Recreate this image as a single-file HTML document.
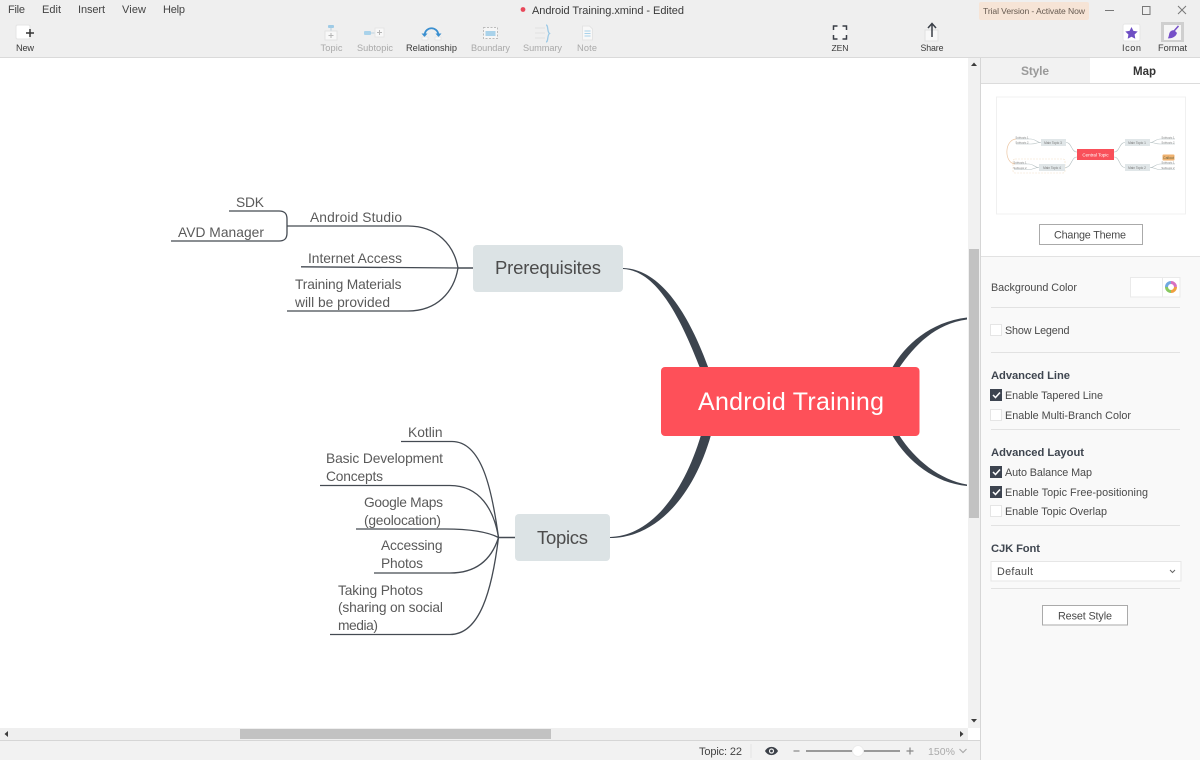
<!DOCTYPE html>
<html><head><meta charset="utf-8"><title>Android Training.xmind - Edited</title>
<style>
html,body{margin:0;padding:0;background:#fff;width:1200px;height:760px;overflow:hidden}
svg{display:block;position:absolute;left:0;top:0}
text{font-family:"Liberation Sans",sans-serif}
.ui{font-size:11px;fill:#444}
.tb{font-size:9.2px;fill:#3a3a3a;text-anchor:middle}
.dis{fill:#a9a9a9}
.m{font-size:13.8px;fill:#5a5a5a}
.p{font-size:10.8px;fill:#4a4a4a}
.h{font-size:11.2px;font-weight:bold;fill:#3f4650}
.ln{fill:none;stroke:#444a52;stroke-width:1.3}
.div{stroke:#e2e2e2;stroke-width:1}
.cb{fill:#fff;stroke:#e5e5e5}
.cbon{fill:#3d4450}
.ck{fill:none;stroke:#fff;stroke-width:1.5}
</style></head><body>
<svg width="1200" height="760" viewBox="0 0 1200 760" xmlns="http://www.w3.org/2000/svg">
<rect width="1200" height="760" fill="#efefef"/>
<rect x="0" y="58" width="968" height="670" fill="#fff"/>
<line x1="0" y1="57.5" x2="1200" y2="57.5" stroke="#dadada"/>

<!-- menu -->
<text x="8" y="13" class="ui" textLength="17">File</text>
<text x="42" y="13" class="ui" textLength="19">Edit</text>
<text x="78" y="13" class="ui" textLength="27">Insert</text>
<text x="122" y="13" class="ui" textLength="24">View</text>
<text x="163" y="13" class="ui" textLength="22">Help</text>
<circle cx="523" cy="9.5" r="2.4" fill="#e8485a"/>
<text x="532" y="14" style="font-size:11px;fill:#3a3a3a" textLength="152">Android Training.xmind - Edited</text>
<rect x="979" y="2" width="110" height="18" rx="2" fill="#f6e4d6"/>
<text x="983" y="14" style="font-size:8.6px;fill:#665a50" textLength="102">Trial Version - Activate Now</text>
<line x1="1105" y1="10.5" x2="1114" y2="10.5" stroke="#777"/>
<rect x="1142.5" y="6.5" width="7.5" height="8" fill="none" stroke="#777"/>
<path d="M1178 6l8 8M1186 6l-8 8" stroke="#777" fill="none"/>

<!-- toolbar -->
<rect x="16" y="25" width="14" height="14" rx="1.5" fill="#fff" stroke="#e4e4e4"/>
<path d="M30 29v8M26 33h8" stroke="#333" stroke-width="1.5"/>
<text x="25" y="51" class="tb" textLength="18">New</text>

<!-- Topic -->
<rect x="328" y="25" width="6" height="3" rx="1" fill="#9fcbe6"/>
<line x1="331" y1="28" x2="331" y2="31" stroke="#b7cfdd"/>
<rect x="325" y="31" width="12" height="9" fill="#f8f8f8" stroke="#e2e2e2"/>
<path d="M331 33v5M328.500 35.500h5" stroke="#b5b5b5"/>
<text x="331.500" y="51" class="tb dis" textLength="22">Topic</text>
<!-- Subtopic -->
<rect x="364" y="31" width="7" height="4" rx="1" fill="#a9d2ea"/>
<line x1="371" y1="33" x2="375" y2="33" stroke="#bcd3e0"/>
<rect x="375" y="28" width="9" height="9" fill="#f8f8f8" stroke="#e6e6e6"/>
<path d="M379.500 30v5M377 32.500h5" stroke="#b5b5b5"/>
<text x="375" y="51" class="tb dis" textLength="36">Subtopic</text>
<!-- Relationship -->
<path d="M424.500 35c1-9 13-9 14 0" fill="none" stroke="#3a8fd0" stroke-width="1.800"/>
<path d="M421.500 33.500h6l-3 3.500zM435.500 33.500h6l-3 3.500z" fill="#3a8fd0"/>
<rect x="422" y="37" width="6" height="3" fill="#fafafa" stroke="#ddd" stroke-width=".6"/>
<rect x="435" y="37" width="6" height="3" fill="#fafafa" stroke="#ddd" stroke-width=".6"/>
<text x="431.500" y="51" class="tb" textLength="51">Relationship</text>
<!-- Boundary -->
<rect x="483.500" y="27.500" width="14" height="11" fill="#f6f6f6" stroke="#bbb" stroke-dasharray="2 1.500"/>
<rect x="485.500" y="31" width="10" height="5" fill="#a9d2ea"/>
<text x="490.500" y="51" class="tb dis" textLength="39">Boundary</text>
<!-- Summary -->
<path d="M535 28h10M535 33h10M535 38h10" stroke="#e3e3e3" stroke-width="1.200"/>
<path d="M546 25c2.500 0 1 7 3.500 8.500c-2.500 1.500-1 8.500-3.500 8.500" fill="none" stroke="#9cc9e6" stroke-width="1.300"/>
<text x="542.500" y="51" class="tb dis" textLength="39">Summary</text>
<!-- Note -->
<path d="M582.500 26h7l3 3v11h-10z" fill="#f8f8f8" stroke="#e4e4e4"/>
<path d="M584.500 31h6M584.500 33.500h6M584.500 36h6" stroke="#a9d2ea"/>
<text x="587" y="51" class="tb dis" textLength="20">Note</text>
<!-- ZEN -->
<rect x="834" y="27" width="13" height="12" fill="#f6f6f6"/>
<path d="M833.500 30v-4h4M842.500 26h4v4M846.500 35v4h-4M837.500 39h-4v-4" fill="none" stroke="#3a3f47" stroke-width="1.500"/>
<text x="840" y="51" class="tb" textLength="17" style="font-size:8.6px">ZEN</text>
<!-- Share -->
<rect x="925" y="30" width="13" height="11" fill="#f8f8f8" stroke="#e0e0e0"/>
<path d="M932 37v-13M928 28l4-4.500 4 4.500" fill="none" stroke="#3a3f47" stroke-width="1.500"/>
<text x="932" y="51" class="tb" textLength="23" style="font-size:8.8px">Share</text>
<!-- Icon -->
<rect x="1123" y="24" width="17" height="17" rx="2" fill="#fff" stroke="#e6e6e6"/>
<path d="M1131.500 27l1.900 3.900 4.300.6-3.100 3 .7 4.300-3.800-2-3.800 2 .7-4.300-3.100-3 4.300-.6z" fill="#6e4fc4"/>
<text x="1131.500" y="51" class="tb" textLength="19">Icon</text>
<!-- Format -->
<rect x="1161" y="22" width="23" height="20" fill="#cfcfcf"/>
<rect x="1164" y="25" width="17" height="15" fill="#f6f6f6"/>
<path d="M1178.500 26.500l-4 4.500 2 2c-.5 2.500-3.500 5-8 5c.8-1.500 .8-3 1.200-4.500c.6-2 2.300-3 4.300-3l4-4.500z" fill="#7650c8" stroke="#7650c8" stroke-width=".8"/>
<text x="1172.500" y="51" class="tb" textLength="29">Format</text>

<!-- scrollbars -->
<rect x="968" y="58" width="12" height="670" fill="#f1f1f1"/>
<rect x="969" y="249" width="10" height="269" fill="#c2c2c2"/>
<path d="M971 66l3-3.500 3 3.500z M971 719l3 3.500 3-3.500z" fill="#3c3c3c"/>
<rect x="0" y="728" width="968" height="12" fill="#efefef"/>
<rect x="968" y="728" width="12" height="12" fill="#fff"/>
<rect x="240" y="729" width="311" height="10" fill="#c2c2c2"/>
<path d="M8 731l-3.500 3 3.500 3z M960 731l3.500 3-3.500 3z" fill="#3c3c3c"/>
<rect x="0" y="741" width="980" height="19" fill="#f2f2f2"/>
<line x1="0" y1="740.500" x2="980" y2="740.500" stroke="#d6d6d6"/>
<text x="699" y="755" style="font-size:11px;fill:#444" textLength="43">Topic: 22</text>
<line x1="751" y1="744" x2="751" y2="758" stroke="#e4e4e4"/>
<path d="M765 751c3-5.500 10-5.500 13 0c-3 5.500-10 5.500-13 0z" fill="#3c4149"/>
<circle cx="771.500" cy="751" r="2.600" fill="#f2f2f2"/><circle cx="771.500" cy="751" r="1.400" fill="#3c4149"/>
<line x1="793.500" y1="751" x2="799.500" y2="751" stroke="#888" stroke-width="1.200"/>
<line x1="806" y1="751" x2="900" y2="751" stroke="#9a9a9a" stroke-width="2"/>
<circle cx="858" cy="751" r="5.500" fill="#fff" stroke="#ececec"/>
<path d="M906.500 751h7M910 747.500v7" stroke="#888" stroke-width="1.200"/>
<text x="928" y="755" style="font-size:10.500px;fill:#aaa" textLength="27">150%</text>
<path d="M959.500 749l3.500 3.500 3.500-3.500" fill="none" stroke="#aaa" stroke-width="1.200"/>

<!-- right panel -->
<rect x="980" y="58" width="220" height="702" fill="#f9f9f9"/>
<line x1="980.500" y1="58" x2="980.500" y2="760" stroke="#d6d6d6"/>
<rect x="981" y="84" width="219" height="172" fill="#fff"/>
<rect x="981" y="58" width="109" height="25" fill="#f2f2f2"/>
<rect x="1090" y="58" width="110" height="25" fill="#fff"/>
<line x1="981" y1="83.500" x2="1200" y2="83.500" stroke="#dcdcdc"/>
<line x1="981" y1="256.500" x2="1200" y2="256.500" stroke="#e2e2e2"/>
<text x="1021" y="75" style="font-size:12px;font-weight:bold;fill:#9a9a9a" textLength="28">Style</text>
<text x="1133" y="75" style="font-size:11.500px;font-weight:bold;fill:#333" textLength="23">Map</text>

<!-- preview -->
<rect x="996.500" y="97" width="189" height="117" fill="#fff" stroke="#f0f0f0"/>
<g fill="none" stroke="#b4bfc1" stroke-width=".6">
<path d="M1077 152C1071 152 1072 142.500 1066 142.500M1077 157C1071 157 1072 167.500 1065 167.500M1114 152C1120 152 1119 142.500 1125 142.500M1114 157C1120 157 1119 167.500 1125 167.500"/>
<path d="M1041 142.500C1036 142.500 1036 139 1031 139H1016M1041 142.500C1036 142.500 1036 144 1031 144H1016M1150 142.500C1155 142.500 1155 139 1160 139H1175M1150 142.500C1155 142.500 1155 144 1160 144H1175M1039 167.500C1034 167.500 1034 164 1029 164H1014M1039 167.500C1034 167.500 1034 169.500 1029 169.500H1014M1150 167.500C1155 167.500 1155 164 1160 164H1175M1150 167.500C1155 167.500 1155 169.500 1160 169.500H1175"/>
</g>
<path d="M1016 139c-12 1-12 24 -1 25" fill="none" stroke="#ecc6a4" stroke-width=".7"/>
<rect x="1013" y="159" width="52" height="14" rx="2" fill="none" stroke="#f2dfc8" stroke-width=".6" stroke-dasharray="2 1"/>
<rect x="1077" y="149" width="37" height="11" fill="#f9505a"/>
<text x="1095.500" y="156.500" text-anchor="middle" style="font-size:4.500px;fill:#fff">Central Topic</text>
<g fill="#e0e6e8">
<rect x="1041" y="139" width="25" height="7"/><rect x="1039" y="164" width="26" height="7"/>
<rect x="1125" y="139" width="25" height="7"/><rect x="1125" y="164" width="25" height="7"/>
</g>
<g style="font-size:3.200px;fill:#777" text-anchor="middle">
<text x="1053" y="144">Main Topic 3</text><text x="1052" y="169">Main Topic 4</text>
<text x="1137" y="144">Main Topic 1</text><text x="1137" y="169">Main Topic 2</text>
</g>
<g style="font-size:2.800px;fill:#777" text-anchor="middle">
<text x="1022" y="138.500">Subtopic 1</text><text x="1022" y="143.500">Subtopic 2</text>
<text x="1020" y="163.500">Subtopic 1</text><text x="1020" y="169">Subtopic 2</text>
<text x="1168" y="138.500">Subtopic 1</text><text x="1168" y="143.500">Subtopic 2</text>
<text x="1168" y="163.500">Subtopic 1</text><text x="1168" y="169">Subtopic 2</text>
</g>
<rect x="1162.500" y="154.500" width="12" height="6" rx="1" fill="#f0b26f"/>
<text x="1168.500" y="159" text-anchor="middle" style="font-size:3.500px;fill:#664">Callout</text>

<rect x="1039.500" y="224.500" width="103" height="20" fill="#fff" stroke="#aaa"/>
<text x="1054" y="238.500" class="p" textLength="72">Change Theme</text>

<text x="991" y="291" class="p" textLength="86">Background Color</text>
<rect x="1130.500" y="277.500" width="49.500" height="19.500" fill="#fff" stroke="#eaeaea"/>
<line x1="1162.500" y1="278" x2="1162.500" y2="297" stroke="#eaeaea"/>
<circle cx="1171" cy="287" r="4.500" fill="none" stroke="#f0a040" stroke-width="3" stroke-dasharray="7 21.300"/>
<circle cx="1171" cy="287" r="4.500" fill="none" stroke="#88c860" stroke-width="3" stroke-dasharray="7 21.300" stroke-dashoffset="-7"/>
<circle cx="1171" cy="287" r="4.500" fill="none" stroke="#70a8e0" stroke-width="3" stroke-dasharray="7 21.300" stroke-dashoffset="-14"/>
<circle cx="1171" cy="287" r="4.500" fill="none" stroke="#d870c0" stroke-width="3" stroke-dasharray="7 21.300" stroke-dashoffset="-21"/>
<line x1="991" y1="307.500" x2="1180" y2="307.500" class="div"/>

<rect x="990.500" y="324.500" width="11" height="11" class="cb"/>
<text x="1005" y="334" class="p" textLength="64.500">Show Legend</text>
<line x1="991" y1="352.500" x2="1180" y2="352.500" class="div"/>

<text x="991" y="379" class="h" textLength="79">Advanced Line</text>
<rect x="990" y="389" width="12" height="12" class="cbon"/><path d="M993 395l2.500 2.500 4.500-5" class="ck"/>
<text x="1005" y="399" class="p" textLength="98">Enable Tapered Line</text>
<rect x="990.500" y="409.500" width="11" height="11" class="cb"/>
<text x="1005" y="419" class="p" textLength="126">Enable Multi-Branch Color</text>
<line x1="991" y1="429.500" x2="1180" y2="429.500" class="div"/>

<text x="991" y="456" class="h" textLength="93">Advanced Layout</text>
<rect x="990" y="466" width="12" height="12" class="cbon"/><path d="M993 472l2.500 2.500 4.500-5" class="ck"/>
<text x="1005" y="476" class="p" textLength="87">Auto Balance Map</text>
<rect x="990" y="486" width="12" height="12" class="cbon"/><path d="M993 492l2.500 2.500 4.500-5" class="ck"/>
<text x="1005" y="496" class="p" textLength="143">Enable Topic Free-positioning</text>
<rect x="990.500" y="505.500" width="11" height="11" class="cb"/>
<text x="1005" y="515" class="p" textLength="102">Enable Topic Overlap</text>
<line x1="991" y1="525.500" x2="1180" y2="525.500" class="div"/>

<text x="991" y="552" class="h" textLength="49">CJK Font</text>
<rect x="991" y="561.500" width="190" height="19.500" fill="#fff" stroke="#e6e6e6"/>
<text x="997" y="575" class="p" textLength="36">Default</text>
<path d="M1170 570l2.500 2.500 2.500-2.500" fill="none" stroke="#666"/>
<line x1="991" y1="588.500" x2="1180" y2="588.500" class="div"/>
<rect x="1042.500" y="605.500" width="85" height="19.500" fill="#fff" stroke="#aaa"/>
<text x="1058" y="619.500" class="p" textLength="54">Reset Style</text>

<!-- tapered main branches -->
<g fill="#3c444e">
<path d="M623 269C658 270.500 682 322 700 368L708.500 368C690 317 662 269 623 268Z"/>
<path d="M610 537C650 536 683 495 701 435L711 435C693 498 655 538 610 538Z"/>
<path d="M892 368C905 345 930 322 967 317.500L967 319.500C935 324 915 345 899 368Z"/>
<path d="M892 435C908 462 935 483 967 486L967 484.500C940 480 915 460 899 435Z"/>
</g>

<!-- prerequisite sub-branches -->
<g class="ln">
<path d="M473 268H458" stroke-width="1.500"/>
<path d="M458 268C454 245 437 226 408 226H287"/>
<path d="M458 268L301 266.800"/>
<path d="M458 268C454 292 437 311 408 311H287"/>
<path d="M229 211H279C285 211 287 214 287 219V233C287 238 285 241 279 241H171"/>
</g>
<!-- topics sub-branches -->
<g class="ln">
<path d="M515 537.500H498.500" stroke-width="1.500"/>
<path d="M498.500 537.500C492 490 482 441.500 452 441.500H401"/>
<path d="M498.500 537.500C494 510 480 485.500 450 485.500H320"/>
<path d="M498.500 537.500C488 532 472 529 445 529H356"/>
<path d="M498.500 537.500C492 558 478 573 450 573H374"/>
<path d="M498.500 537.500C492 590 480 634.500 450 634.500H330"/>
</g>

<!-- nodes -->
<rect x="661" y="367" width="258.500" height="69" rx="4" fill="#fe5059"/>
<text x="698" y="410" style="font-size:25px;fill:#fff" textLength="186">Android Training</text>
<rect x="473" y="245" width="150" height="47" rx="4" fill="#dce3e5"/>
<text x="495" y="274" style="font-size:18.500px;fill:#4c4c4c" textLength="106">Prerequisites</text>
<rect x="515" y="514" width="95" height="47" rx="4" fill="#dce3e5"/>
<text x="537" y="544" style="font-size:18.500px;fill:#4c4c4c" textLength="51">Topics</text>

<!-- labels -->
<text x="236" y="207" class="m" textLength="28">SDK</text>
<text x="310" y="222" class="m" textLength="92">Android Studio</text>
<text x="178" y="237" class="m" textLength="86">AVD Manager</text>
<text x="308" y="263" class="m" textLength="94">Internet Access</text>
<text x="295" y="289" class="m" textLength="106.500">Training Materials</text>
<text x="295" y="307" class="m" textLength="95">will be provided</text>
<text x="408" y="437" class="m" textLength="34.500">Kotlin</text>
<text x="326" y="463" class="m" textLength="117">Basic Development</text>
<text x="326" y="481" class="m" textLength="57">Concepts</text>
<text x="364" y="507" class="m" textLength="79">Google Maps</text>
<text x="364" y="525" class="m" textLength="77">(geolocation)</text>
<text x="381" y="550" class="m" textLength="61.500">Accessing</text>
<text x="381" y="568" class="m" textLength="42">Photos</text>
<text x="338" y="595" class="m" textLength="85">Taking Photos</text>
<text x="338" y="612" class="m" textLength="105">(sharing on social</text>
<text x="338" y="630" class="m" textLength="40">media)</text>
</svg>
</body></html>
